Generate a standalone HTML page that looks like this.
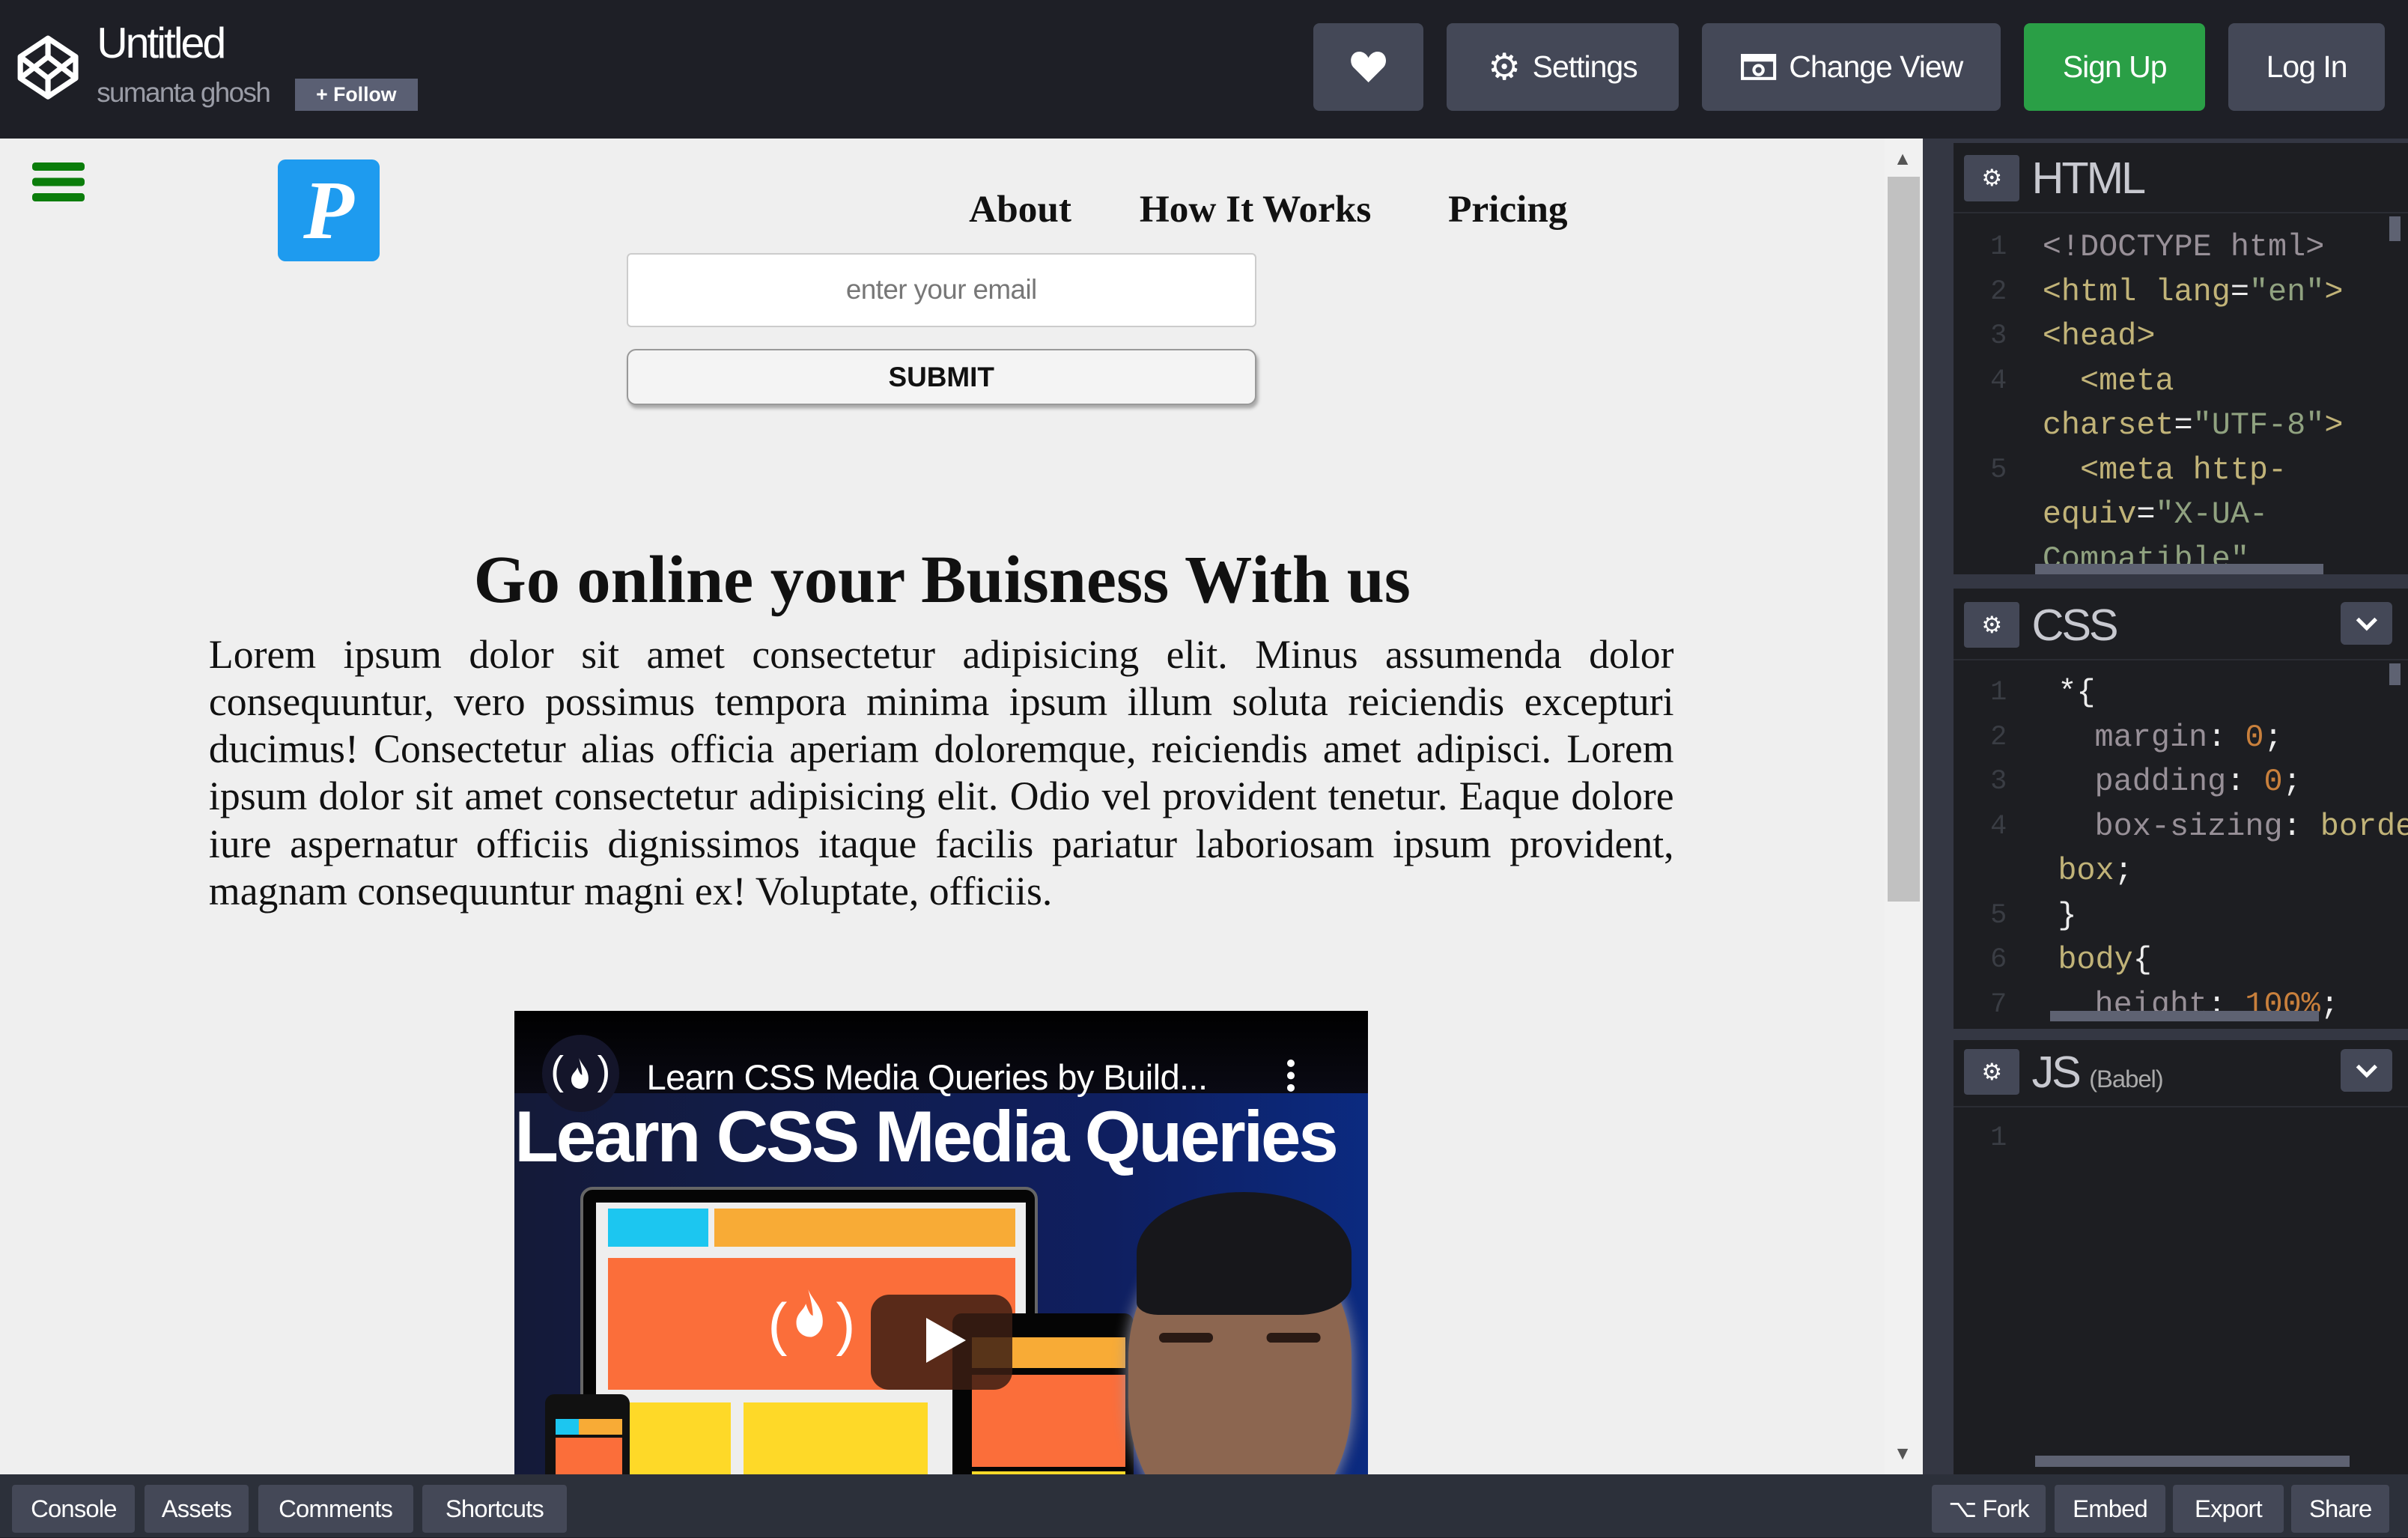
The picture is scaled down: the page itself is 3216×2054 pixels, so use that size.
<!DOCTYPE html>
<html><head><meta charset="utf-8"><style>
*{margin:0;padding:0;box-sizing:border-box}
html,body{width:3216px;height:2054px;overflow:hidden;background:#1e1f26}
#r{zoom:2.0510;width:1568px;height:1001px;position:relative;font-family:"Liberation Sans",sans-serif}
.a{position:absolute}
.btn{position:absolute;top:15px;height:57px;background:#444857;border-radius:4px;color:#fff;font-size:20px;display:flex;align-items:center;justify-content:center;gap:8px}
.bb{position:absolute;top:967px;height:31px;background:#444857;border-radius:2px;color:#fff;font-size:16px;display:flex;align-items:center;justify-content:center}
.c{position:absolute;font-family:"Liberation Mono",monospace;font-size:20.4px;line-height:29px;color:#cfc080;white-space:pre;opacity:.92}
.ln{position:absolute;font-family:"Liberation Mono",monospace;font-size:18px;line-height:29px;color:#3a3d44}
.s{color:#9aae88}
.g{color:#a39aa2}
.w{color:#fff}
.n{color:#d8893f}
.hdr{position:absolute;left:1272px;width:296px;height:44px;background:#1d1e22;border-bottom:1px solid #2a2c33}
.gear{position:absolute;left:7px;top:6px;width:36px;height:30px;background:#444857;border-radius:2px;color:#fff;font-size:15px;text-align:center;line-height:30px}
.ht{position:absolute;left:51px;top:4px;color:#c8c9d0;font-size:29px;letter-spacing:-1.5px}
.chev{position:absolute;right:10px;top:6px;width:34px;height:28px;background:#444857;border-radius:3px}
.nav{position:absolute;top:32px;font-family:'Liberation Serif',serif;font-weight:bold;font-size:25px;color:#111}
</style></head><body><div id="r">
<div class="a" style="left:0;top:0;width:1568px;height:90px;background:#1e1f26"></div>
<svg class="a" style="left:10px;top:22px" width="42" height="44" viewBox="0 0 42 44"><g fill="none" stroke="#fff" stroke-width="3.5" stroke-linejoin="round"><path d="M21 3 L39 15 V29 L21 41 L3 29 V15 Z"/><path d="M3 15 L21 29 L39 15 M3 29 L21 15 L39 29 M21 3 V15 M21 29 V41"/></g></svg>
<div class="a" style="left:63px;top:12px;color:#fff;font-size:28px;letter-spacing:-1.5px">Untitled</div>
<div class="a" style="left:63px;top:50px;color:#9a9ca6;font-size:18px;letter-spacing:-.8px">sumanta ghosh</div>
<div class="a" style="left:192px;top:51px;width:80px;height:21px;background:#5a5f73;color:#fff;font-size:13px;line-height:21px;text-align:center;font-weight:bold">+ Follow</div>
<div class="btn" style="left:855px;width:72px"><svg width="24" height="22" viewBox="0 0 24 22"><path d="M12 21 L2 11 C-1 7 1 1 6 1 C9 1 11 3 12 5 C13 3 15 1 18 1 C23 1 25 7 22 11 Z" fill="#fff"/></svg></div>
<div class="btn" style="left:942px;width:151px;letter-spacing:-.5px"><span style="font-size:24px">⚙</span>Settings</div>
<div class="btn" style="left:1108px;width:195px;letter-spacing:-.5px"><svg width="24" height="18" viewBox="0 0 24 18"><rect x="1.5" y="1.5" width="21" height="15" fill="none" stroke="#fff" stroke-width="2"/><rect x="1.5" y="1.5" width="21" height="4" fill="#fff"/><circle cx="12" cy="11" r="3" fill="none" stroke="#fff" stroke-width="2"/></svg>Change View</div>
<div class="btn" style="left:1318px;width:118px;background:#2a9f46;letter-spacing:-.5px">Sign Up</div>
<div class="btn" style="left:1451px;width:102px;letter-spacing:-.5px">Log In</div>
<div class="a" style="left:0;top:90px;width:1227px;height:870px;background:#efefef;overflow:hidden">
 <div class="a" style="left:21px;top:16px;width:34px;height:5px;background:#0b7d0b;border-radius:2px;box-shadow:0 10px 0 #0b7d0b,0 20px 0 #0b7d0b"></div>
 <div class="a" style="left:181px;top:14px;width:66px;height:66px;background:#1e9bef;border-radius:5px;color:#fff;font-family:'Liberation Serif',serif;font-style:italic;font-weight:bold;font-size:54px;text-align:center;line-height:66px">P</div>
 <div class="nav" style="left:631px">About</div>
 <div class="nav" style="left:742px">How It Works</div>
 <div class="nav" style="left:943px">Pricing</div>
 <div class="a" style="left:408px;top:75px;width:410px;height:48px;background:#fff;border:1px solid #ccc;border-radius:3px;color:#777;font-size:18px;text-align:center;line-height:46px;letter-spacing:-.3px">enter your email</div>
 <div class="a" style="left:408px;top:137px;width:410px;height:37px;background:#f4f4f4;border:1px solid #999;border-radius:6px;box-shadow:1px 2px 2px #aaa;color:#111;font-size:18px;font-weight:bold;text-align:center;line-height:35px">SUBMIT</div>
 <div class="a" style="left:0;top:262px;width:1227px;text-align:center;font-family:'Liberation Serif',serif;font-weight:bold;font-size:44px;color:#111">Go online your Buisness With us</div>
 <div class="a" style="left:136px;top:321px;width:954px;font-family:'Liberation Serif',serif;font-size:26.2px;line-height:30.8px;color:#111;text-align:justify">Lorem ipsum dolor sit amet consectetur adipisicing elit. Minus assumenda dolor consequuntur, vero possimus tempora minima ipsum illum soluta reiciendis excepturi ducimus! Consectetur alias officia aperiam doloremque, reiciendis amet adipisci. Lorem ipsum dolor sit amet consectetur adipisicing elit. Odio vel provident tenetur. Eaque dolore iure aspernatur officiis dignissimos itaque facilis pariatur laboriosam ipsum provident, magnam consequuntur magni ex! Voluptate, officiis.</div>
 <div class="a" style="left:335px;top:568px;width:556px;height:302px;background:linear-gradient(90deg,#141a38,#0f1f60 70%,#0b2a80);overflow:hidden">
  <div class="a" style="left:0;top:0;width:556px;height:54px;background:linear-gradient(#000,#0a0a14)"></div>
  <div class="a" style="left:18px;top:16px;width:50px;height:50px;border-radius:50%;background:#14152a;color:#fff;font-size:26px;line-height:48px;text-align:center">( &nbsp; )</div>
  <svg class="a" style="left:36px;top:30px" width="14" height="22" viewBox="0 0 14 22"><path d="M6 1 C8 6 13 9 12 16 C11 20 8 21 7 21 C4 21 1 19 1 15 C1 11 4 10 5 7 C6 10 7 12 8 12 C8 9 7 5 6 1Z" fill="#fff"/></svg>
  <div class="a" style="left:86px;top:30px;color:#fff;font-size:23px;letter-spacing:-.3px">Learn CSS Media Queries by Build...</div>
  <div class="a" style="left:503px;top:32px;width:5px;height:5px;background:#fff;border-radius:50%;box-shadow:0 8px 0 #fff,0 16px 0 #fff"></div>
  <div class="a" style="left:0;top:56px;color:#fff;font-size:47px;font-weight:bold;letter-spacing:-1.6px;white-space:nowrap">Learn CSS Media Queries</div>
  <div class="a" style="left:43px;top:115px;width:298px;height:200px;background:#050505;border:2px solid #666;border-radius:8px"></div>
  <div class="a" style="left:53px;top:125px;width:280px;height:180px;background:#eee"></div>
  <div class="a" style="left:61px;top:129px;width:65px;height:25px;background:#1cc6f0"></div>
  <div class="a" style="left:130px;top:129px;width:196px;height:25px;background:#f8ab36"></div>
  <div class="a" style="left:61px;top:161px;width:265px;height:86px;background:#fb6e3a;color:#fff;font-size:38px;text-align:center;line-height:86px">( &nbsp; )</div>
  <svg class="a" style="left:182px;top:180px" width="22" height="34" viewBox="0 0 14 22"><path d="M6 1 C8 6 13 9 12 16 C11 20 8 21 7 21 C4 21 1 19 1 15 C1 11 4 10 5 7 C6 10 7 12 8 12 C8 9 7 5 6 1Z" fill="#fff"/></svg>
  <div class="a" style="left:61px;top:255px;width:80px;height:60px;background:#fed928"></div>
  <div class="a" style="left:149px;top:255px;width:120px;height:60px;background:#fed928"></div>
  <div class="a" style="left:20px;top:250px;width:55px;height:70px;background:#111;border-radius:6px"></div>
  <div class="a" style="left:27px;top:266px;width:15px;height:10px;background:#1cc6f0"></div>
  <div class="a" style="left:42px;top:266px;width:28px;height:10px;background:#f8ab36"></div>
  <div class="a" style="left:27px;top:278px;width:43px;height:30px;background:#fb6e3a"></div>
  <div class="a" style="left:285px;top:197px;width:118px;height:120px;background:#050505;border-radius:6px"></div>
  <div class="a" style="left:298px;top:213px;width:100px;height:20px;background:#f8ab36"></div>
  <div class="a" style="left:298px;top:237px;width:100px;height:60px;background:#fb6e3a"></div>
  <div class="a" style="left:298px;top:300px;width:100px;height:10px;background:#fed928"></div>
  <div class="a" style="left:232px;top:185px;width:92px;height:62px;background:rgba(60,30,20,.85);border-radius:12px"></div>
  <div class="a" style="left:268px;top:200px;width:0;height:0;border-left:26px solid #fff;border-top:15px solid transparent;border-bottom:15px solid transparent"></div>
  <div class="a" style="left:400px;top:150px;width:145px;height:190px;background:#8c6650;border-radius:40% 40% 45% 45%;box-shadow:0 0 10px #99a"></div>
  <div class="a" style="left:405px;top:118px;width:140px;height:80px;background:#17171b;border-radius:50% 50% 25% 10%"></div>
  <div class="a" style="left:420px;top:210px;width:35px;height:6px;background:#2a1a14;border-radius:3px;box-shadow:70px 0 0 #2a1a14"></div>
 </div>
</div>
<div class="a" style="left:1227px;top:90px;width:25px;height:870px;background:#f1f1f1"></div>
<div class="a" style="left:1229px;top:115px;width:21px;height:472px;background:#c1c1c1"></div>
<div class="a" style="left:1233px;top:97px;color:#555;font-size:12px">▲</div>
<div class="a" style="left:1233px;top:940px;color:#555;font-size:12px">▼</div>
<div class="a" style="left:1252px;top:90px;width:316px;height:870px;background:#343743"></div>
<div class="a" style="left:1272px;top:93px;width:296px;height:284px;background:#1d1e22;overflow:hidden">
 <div class="ln" style="left:24px;top:54px">1</div><div class="ln" style="left:24px;top:83px">2</div><div class="ln" style="left:24px;top:112px">3</div><div class="ln" style="left:24px;top:141px">4</div><div class="ln" style="left:24px;top:199px">5</div>
 <div class="c g" style="left:58px;top:54px">&lt;!DOCTYPE html&gt;</div>
 <div class="c" style="left:58px;top:83px">&lt;html lang<span class="w">=</span><span class="s">"en"</span>&gt;</div>
 <div class="c" style="left:58px;top:112px">&lt;head&gt;</div>
 <div class="c" style="left:58px;top:141px">  &lt;meta</div>
 <div class="c" style="left:58px;top:170px">charset<span class="w">=</span><span class="s">"UTF-8"</span>&gt;</div>
 <div class="c" style="left:58px;top:199px">  &lt;meta http-</div>
 <div class="c" style="left:58px;top:228px">equiv<span class="w">=</span><span class="s">"X-UA-</span></div>
 <div class="c s" style="left:58px;top:257px">Compatible"</div>
</div>
<div class="hdr" style="top:95px"><div class="gear">⚙</div><div class="ht">HTML</div></div>
<div class="a" style="left:1272px;top:374px;width:296px;height:7px;background:#343743"></div>
<div class="a" style="left:1325px;top:367px;width:188px;height:7px;background:#5e6272"></div>
<div class="a" style="left:1556px;top:141px;width:7px;height:16px;background:#5e6272"></div>
<div class="a" style="left:1272px;top:383px;width:296px;height:287px;background:#1d1e22;overflow:hidden">
 <div class="ln" style="left:24px;top:54px">1</div><div class="ln" style="left:24px;top:83px">2</div><div class="ln" style="left:24px;top:112px">3</div><div class="ln" style="left:24px;top:141px">4</div><div class="ln" style="left:24px;top:199px">5</div><div class="ln" style="left:24px;top:228px">6</div><div class="ln" style="left:24px;top:257px">7</div>
 <div class="c w" style="left:68px;top:54px">*{</div>
 <div class="c" style="left:92px;top:83px"><span class="g">margin</span><span class="w">:</span> <span class="n">0</span><span class="w">;</span></div>
 <div class="c" style="left:92px;top:112px"><span class="g">padding</span><span class="w">:</span> <span class="n">0</span><span class="w">;</span></div>
 <div class="c" style="left:92px;top:141px"><span class="g">box-sizing</span><span class="w">:</span> borde</div>
 <div class="c" style="left:68px;top:170px">box<span class="w">;</span></div>
 <div class="c w" style="left:68px;top:199px">}</div>
 <div class="c" style="left:68px;top:228px">body<span class="w">{</span></div>
 <div class="c" style="left:92px;top:257px"><span class="g">height</span><span class="w">:</span> <span class="n">100%</span><span class="w">;</span></div>
</div>
<div class="hdr" style="top:386px"><div class="gear">⚙</div><div class="ht">CSS</div><div class="chev"><svg width="34" height="28"><path d="M11 11 L17 17 L23 11" stroke="#fff" stroke-width="2.5" fill="none"/></svg></div></div>
<div class="a" style="left:1272px;top:670px;width:296px;height:7px;background:#343743"></div>
<div class="a" style="left:1335px;top:658px;width:175px;height:7px;background:#5e6272"></div>
<div class="a" style="left:1556px;top:432px;width:7px;height:14px;background:#5e6272"></div>
<div class="a" style="left:1272px;top:677px;width:296px;height:283px;background:#1d1e22"></div>
<div class="hdr" style="top:677px"><div class="gear">⚙</div><div class="ht">JS <span style="font-size:16px;letter-spacing:-.5px;color:#aaa">(Babel)</span></div><div class="chev"><svg width="34" height="28"><path d="M11 11 L17 17 L23 11" stroke="#fff" stroke-width="2.5" fill="none"/></svg></div></div>
<div class="ln" style="left:1296px;top:727px">1</div>
<div class="a" style="left:1325px;top:948px;width:205px;height:7px;background:#5e6272"></div>
<div class="a" style="left:0;top:960px;width:1568px;height:41px;background:#2c303a"></div>
<div class="bb" style="left:8px;width:80px;letter-spacing:-.4px">Console</div>
<div class="bb" style="left:94px;width:68px;letter-spacing:-.4px">Assets</div>
<div class="bb" style="left:168px;width:101px;letter-spacing:-.4px">Comments</div>
<div class="bb" style="left:275px;width:94px;letter-spacing:-.4px">Shortcuts</div>
<div class="bb" style="left:1258px;width:74px;letter-spacing:-.4px">⌥ Fork</div>
<div class="bb" style="left:1338px;width:72px;letter-spacing:-.4px">Embed</div>
<div class="bb" style="left:1415px;width:72px;letter-spacing:-.4px">Export</div>
<div class="bb" style="left:1492px;width:64px;letter-spacing:-.4px">Share</div>
</div></body></html>
